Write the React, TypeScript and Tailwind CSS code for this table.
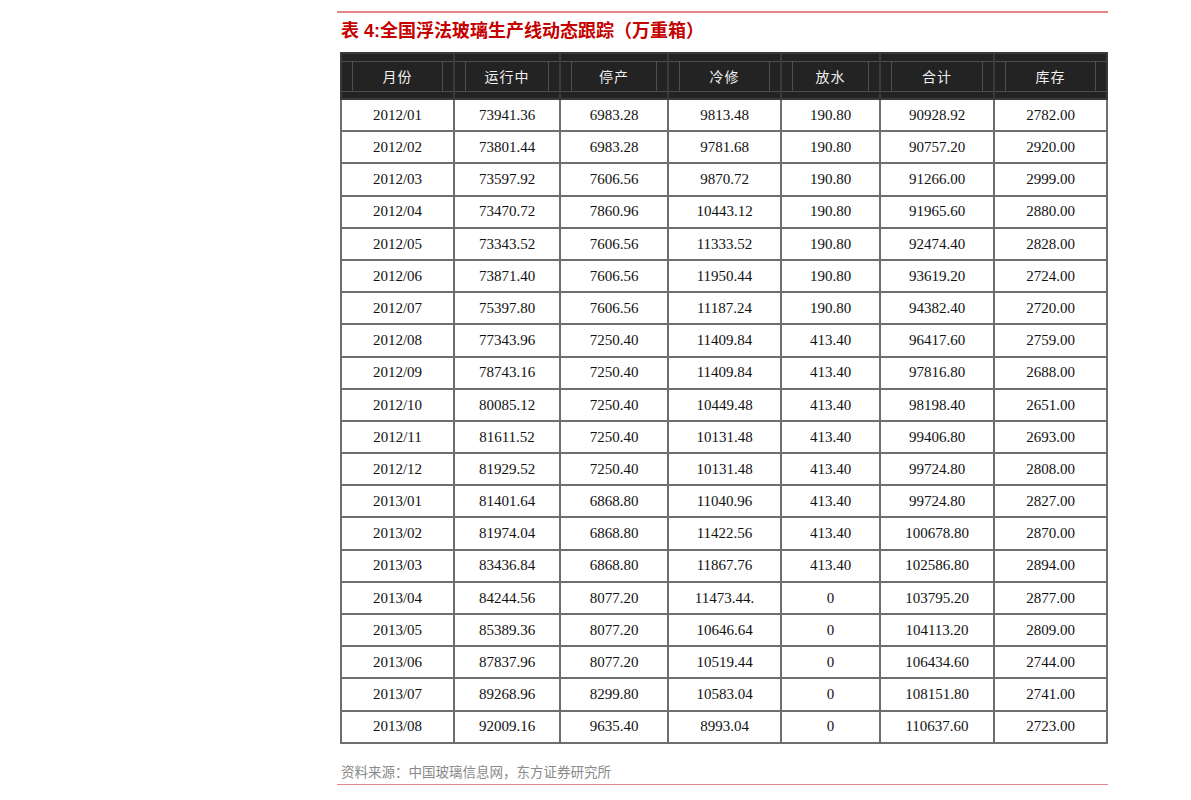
const headers = ['月份', '运行中', '停产', '冷修', '放水', '合计', '库存'];

const rows: string[][] = [
  ['2012/01', '73941.36', '6983.28', '9813.48', '190.80', '90928.92', '2782.00'],
  ['2012/02', '73801.44', '6983.28', '9781.68', '190.80', '90757.20', '2920.00'],
  ['2012/03', '73597.92', '7606.56', '9870.72', '190.80', '91266.00', '2999.00'],
  ['2012/04', '73470.72', '7860.96', '10443.12', '190.80', '91965.60', '2880.00'],
  ['2012/05', '73343.52', '7606.56', '11333.52', '190.80', '92474.40', '2828.00'],
  ['2012/06', '73871.40', '7606.56', '11950.44', '190.80', '93619.20', '2724.00'],
  ['2012/07', '75397.80', '7606.56', '11187.24', '190.80', '94382.40', '2720.00'],
  ['2012/08', '77343.96', '7250.40', '11409.84', '413.40', '96417.60', '2759.00'],
  ['2012/09', '78743.16', '7250.40', '11409.84', '413.40', '97816.80', '2688.00'],
  ['2012/10', '80085.12', '7250.40', '10449.48', '413.40', '98198.40', '2651.00'],
  ['2012/11', '81611.52', '7250.40', '10131.48', '413.40', '99406.80', '2693.00'],
  ['2012/12', '81929.52', '7250.40', '10131.48', '413.40', '99724.80', '2808.00'],
  ['2013/01', '81401.64', '6868.80', '11040.96', '413.40', '99724.80', '2827.00'],
  ['2013/02', '81974.04', '6868.80', '11422.56', '413.40', '100678.80', '2870.00'],
  ['2013/03', '83436.84', '6868.80', '11867.76', '413.40', '102586.80', '2894.00'],
  ['2013/04', '84244.56', '8077.20', '11473.44.', '0', '103795.20', '2877.00'],
  ['2013/05', '85389.36', '8077.20', '10646.64', '0', '104113.20', '2809.00'],
  ['2013/06', '87837.96', '8077.20', '10519.44', '0', '106434.60', '2744.00'],
  ['2013/07', '89268.96', '8299.80', '10583.04', '0', '108151.80', '2741.00'],
  ['2013/08', '92009.16', '9635.40', '8993.04', '0', '110637.60', '2723.00'],
];

// 列宽（像素）
const colWidths = [113, 106, 108, 113, 99, 114, 113];

export default function App() {
  return (
    <div className="min-h-[800px] w-full bg-white">
      <div className="ml-[337px] w-[771px] pt-[11px]">
        <div className="h-[2px] bg-[#e68585]" />

        {/* 标题 */}
        <h2 className="mt-[6px] pl-[4px] text-[18px] leading-[24px] font-bold text-[#c40000] [font-family:'Liberation_Sans','Noto_Sans_CJK_SC',sans-serif]">
          表 4:全国浮法玻璃生产线动态跟踪（万重箱）
        </h2>

        {/* 表格 */}
        <table className="mt-[9px] ml-[3px] w-[766px] table-fixed border-collapse">
          <colgroup>
            {colWidths.map((w, i) => (
              <col key={i} style={{ width: w }} />
            ))}
          </colgroup>
          <thead>
            <tr className="h-[46px]">
              {headers.map((h) => (
                <th
                  key={h}
                  className="border-2 border-[#3a3a3a] bg-[#232323] p-0 align-middle font-normal"
                >
                  <div className="my-[6px] border-y border-[#4e4e4e]">
                    <div className="mx-[10px] flex h-[29px] items-center justify-center border-x border-[#4e4e4e] text-[14px] tracking-[1px] text-[#f0f0f0] [font-family:'Noto_Sans_CJK_SC',sans-serif]">
                      {h}
                    </div>
                  </div>
                </th>
              ))}
            </tr>
          </thead>
          <tbody>
            {rows.map((r) => (
              <tr key={r[0]} className="h-[32.2px]">
                {r.map((c, i) => (
                  <td
                    key={i}
                    className="border-2 border-[#6e6e6e] p-0 text-center align-middle text-[15px] text-[#111] [font-family:'Liberation_Serif',serif]"
                  >
                    {c}
                  </td>
                ))}
              </tr>
            ))}
          </tbody>
        </table>

        {/* 资料来源 */}
        <p className="mt-[18px] pl-[4px] text-[13.5px] leading-[18px] text-[#8a8a8a] [font-family:'Noto_Sans_CJK_SC',sans-serif]">
          资料来源：中国玻璃信息网，东方证券研究所
        </p>
        <div className="mt-[4px] h-[1px] bg-[#e68585]" />
      </div>
    </div>
  );
}
